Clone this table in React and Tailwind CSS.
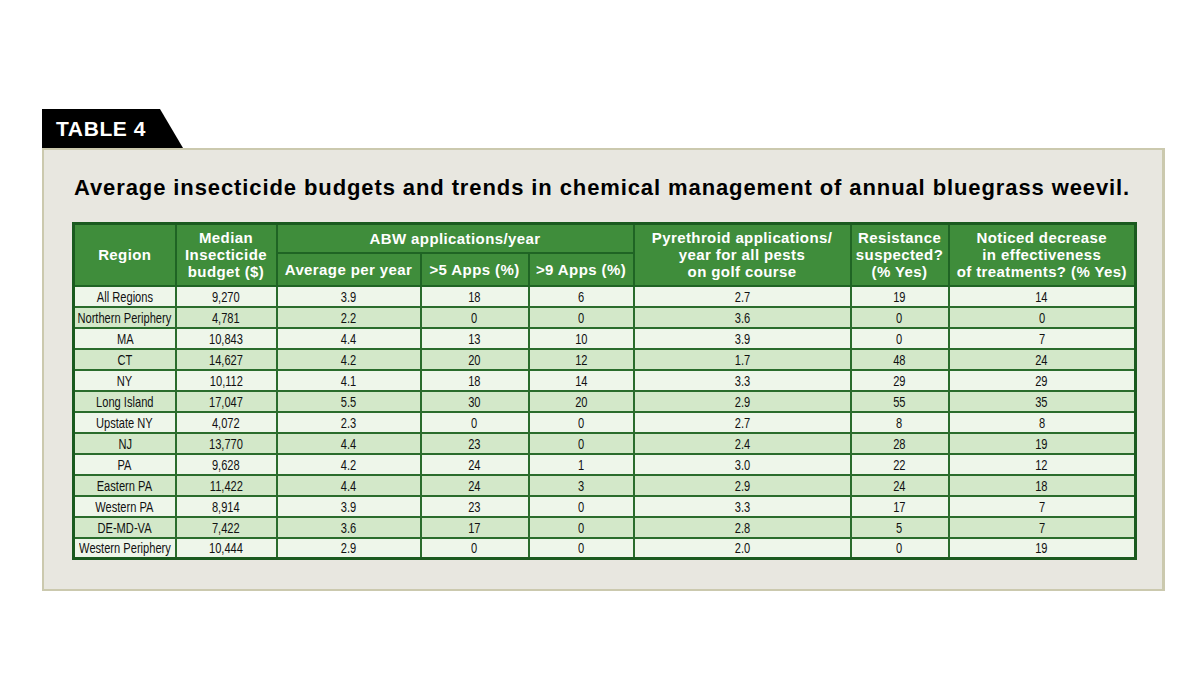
import React from "react";

const rows = [
  ["All Regions", "9,270", "3.9", "18", "6", "2.7", "19", "14"],
  ["Northern Periphery", "4,781", "2.2", "0", "0", "3.6", "0", "0"],
  ["MA", "10,843", "4.4", "13", "10", "3.9", "0", "7"],
  ["CT", "14,627", "4.2", "20", "12", "1.7", "48", "24"],
  ["NY", "10,112", "4.1", "18", "14", "3.3", "29", "29"],
  ["Long Island", "17,047", "5.5", "30", "20", "2.9", "55", "35"],
  ["Upstate NY", "4,072", "2.3", "0", "0", "2.7", "8", "8"],
  ["NJ", "13,770", "4.4", "23", "0", "2.4", "28", "19"],
  ["PA", "9,628", "4.2", "24", "1", "3.0", "22", "12"],
  ["Eastern PA", "11,422", "4.4", "24", "3", "2.9", "24", "18"],
  ["Western PA", "8,914", "3.9", "23", "0", "3.3", "17", "7"],
  ["DE-MD-VA", "7,422", "3.6", "17", "0", "2.8", "5", "7"],
  ["Western Periphery", "10,444", "2.9", "0", "0", "2.0", "0", "19"],
];

const widths = [102, 101, 144, 108, 105, 217, 98, 187];

export default function App() {
  const th =
    "border-2 border-[#1f6424] bg-[#3f8d3b] text-white font-bold text-center align-middle leading-[17px] text-[15px] tracking-[0.4px] p-0";
  return (
    <div
      className="w-[1200px] h-[675px] bg-white pt-[109px] pl-[42px]"
      style={{ fontFamily: '"Liberation Sans", Arial, sans-serif' }}
    >
      <div className="w-[141px] h-[39px] bg-black [clip-path:polygon(0_0,118px_0,100%_100%,0_100%)] flex items-center pl-[14px]">
        <span className="text-white font-bold text-[21px] leading-none tracking-[0.6px]">
          TABLE 4
        </span>
      </div>
      <div className="w-[1123px] h-[443px] border-2 border-r-[3px] border-[#cbc9ae] bg-[#e8e7e0]">
        <div className="pt-[25px] pl-[30px] h-[72px]">
          <h1 className="text-[22px] font-bold leading-[26px] text-black tracking-[0.9px] whitespace-nowrap">
            Average insecticide budgets and trends in chemical management of annual bluegrass weevil.
          </h1>
        </div>
        <table className="ml-[28px] border-collapse border-[3px] border-[#1a5a1f] table-fixed w-[1062px]">
          <colgroup>
            {widths.map((w, i) => (
              <col key={i} style={{ width: w }} />
            ))}
          </colgroup>
          <thead>
            <tr className="h-[29px]">
              <th rowSpan={2} className={th}>Region</th>
              <th rowSpan={2} className={th}>
                Median
                <br />
                Insecticide
                <br />
                budget ($)
              </th>
              <th colSpan={3} className={th}>ABW applications/year</th>
              <th rowSpan={2} className={th}>
                Pyrethroid applications/
                <br />
                year for all pests
                <br />
                on golf course
              </th>
              <th rowSpan={2} className={th}>
                Resistance
                <br />
                suspected?
                <br />
                (% Yes)
              </th>
              <th rowSpan={2} className={th}>
                Noticed decrease
                <br />
                in effectiveness
                <br />
                of treatments? (% Yes)
              </th>
            </tr>
            <tr className="h-[33px]">
              <th className={th}>Average per year</th>
              <th className={th}>&gt;5 Apps (%)</th>
              <th className={th}>&gt;9 Apps (%)</th>
            </tr>
          </thead>
          <tbody>
            {rows.map((r, i) => (
              <tr
                key={i}
                className={`h-[21px] ${i % 2 === 0 ? "bg-[#eef6ea]" : "bg-[#d3e8c9]"}`}
              >
                {r.map((c, j) => (
                  <td
                    key={j}
                    className="border-2 border-[#2a6c2c] text-[15px] leading-[17px] text-[#111] p-0"
                  >
                    <div className="flex justify-center">
                      <span className="shrink-0 whitespace-nowrap scale-x-[0.74] origin-center">
                        {c}
                      </span>
                    </div>
                  </td>
                ))}
              </tr>
            ))}
          </tbody>
        </table>
      </div>
    </div>
  );
}
